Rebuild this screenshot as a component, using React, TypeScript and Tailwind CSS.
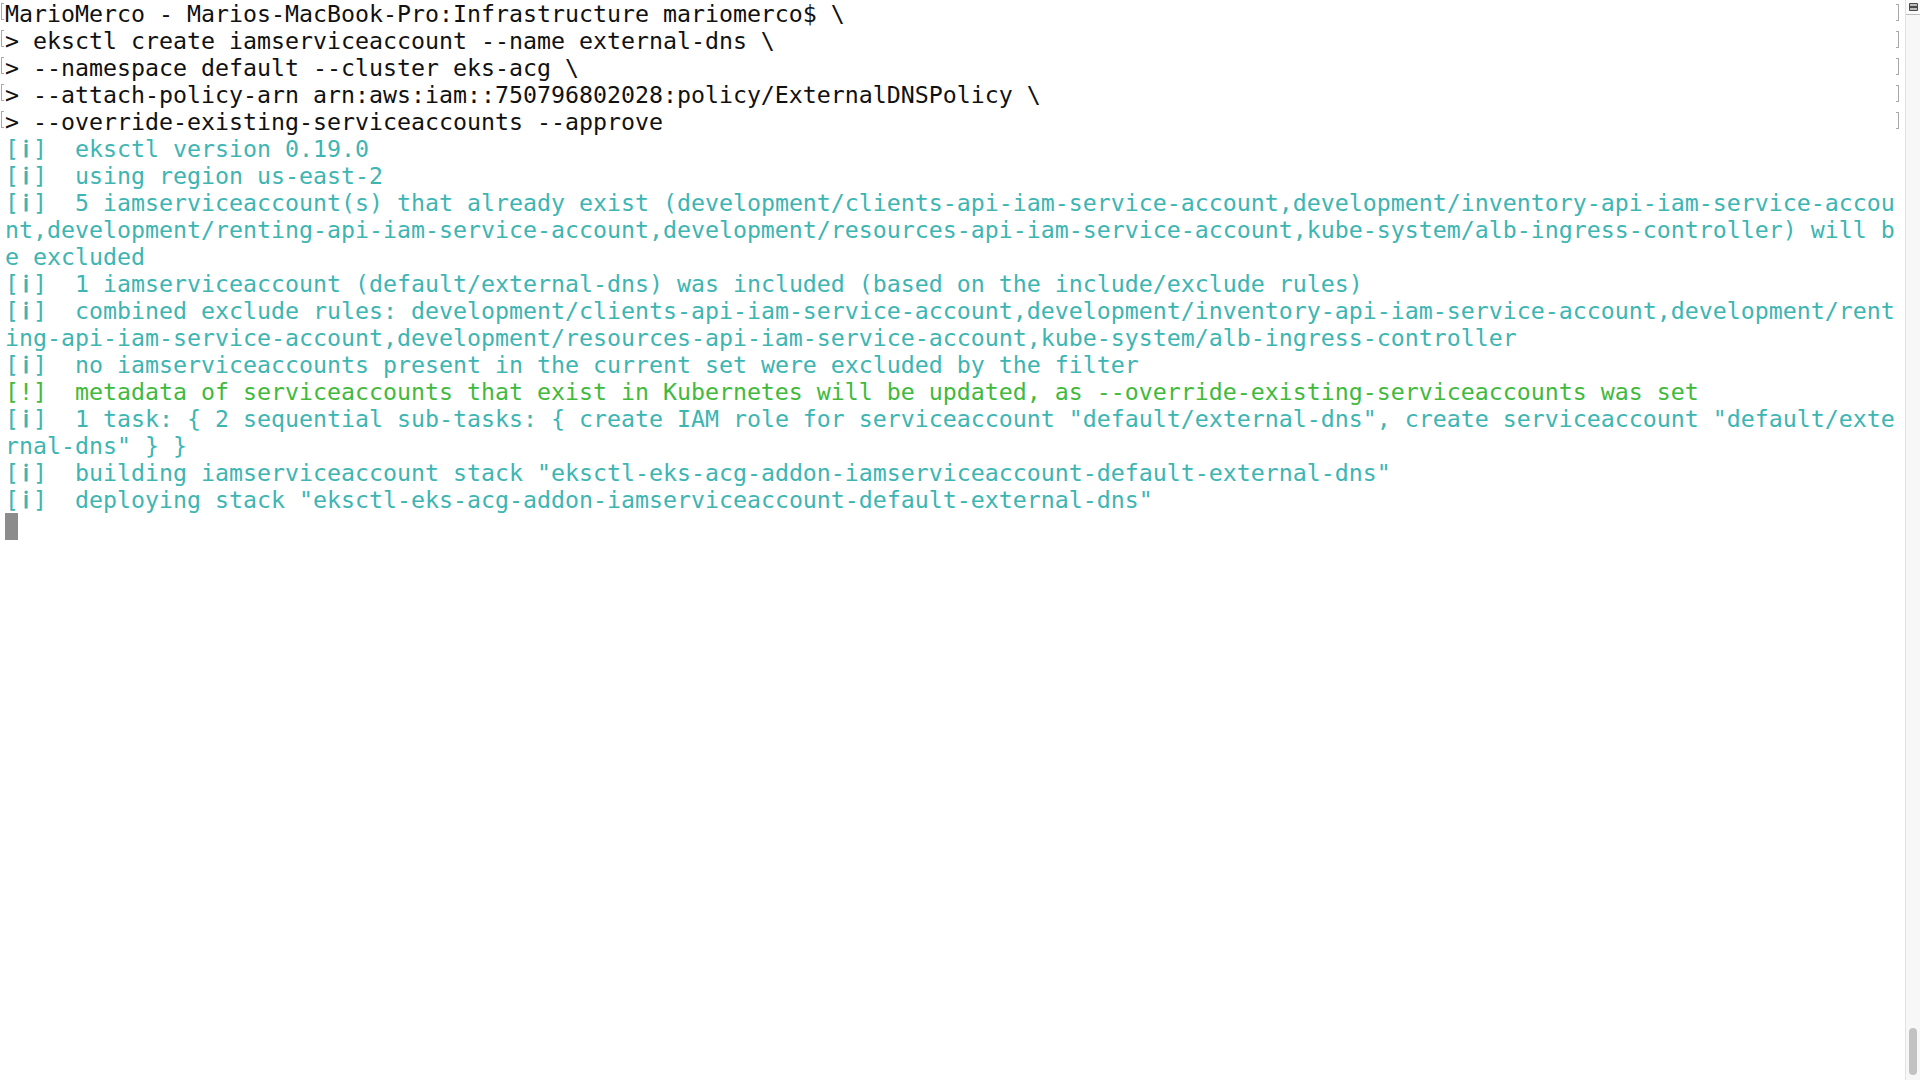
import React from "react";

type Line = { text: string; color: "black" | "cyan" | "green"; mark?: boolean };

const I = "\u2139";

const lines: Line[] = [
  { text: "MarioMerco - Marios-MacBook-Pro:Infrastructure mariomerco$ \\", color: "black", mark: true },
  { text: "> eksctl create iamserviceaccount --name external-dns \\", color: "black", mark: true },
  { text: "> --namespace default --cluster eks-acg \\", color: "black", mark: true },
  { text: "> --attach-policy-arn arn:aws:iam::750796802028:policy/ExternalDNSPolicy \\", color: "black", mark: true },
  { text: "> --override-existing-serviceaccounts --approve", color: "black", mark: true },
  { text: "[i]  eksctl version 0.19.0", color: "cyan" },
  { text: "[i]  using region us-east-2", color: "cyan" },
  { text: "[i]  5 iamserviceaccount(s) that already exist (development/clients-api-iam-service-account,development/inventory-api-iam-service-accou", color: "cyan" },
  { text: "nt,development/renting-api-iam-service-account,development/resources-api-iam-service-account,kube-system/alb-ingress-controller) will b", color: "cyan" },
  { text: "e excluded", color: "cyan" },
  { text: "[i]  1 iamserviceaccount (default/external-dns) was included (based on the include/exclude rules)", color: "cyan" },
  { text: "[i]  combined exclude rules: development/clients-api-iam-service-account,development/inventory-api-iam-service-account,development/rent", color: "cyan" },
  { text: "ing-api-iam-service-account,development/resources-api-iam-service-account,kube-system/alb-ingress-controller", color: "cyan" },
  { text: "[i]  no iamserviceaccounts present in the current set were excluded by the filter", color: "cyan" },
  { text: "[!]  metadata of serviceaccounts that exist in Kubernetes will be updated, as --override-existing-serviceaccounts was set", color: "green" },
  { text: "[i]  1 task: { 2 sequential sub-tasks: { create IAM role for serviceaccount \"default/external-dns\", create serviceaccount \"default/exte", color: "cyan" },
  { text: "rnal-dns\" } }", color: "cyan" },
  { text: "[i]  building iamserviceaccount stack \"eksctl-eks-acg-addon-iamserviceaccount-default-external-dns\"", color: "cyan" },
  { text: "[i]  deploying stack \"eksctl-eks-acg-addon-iamserviceaccount-default-external-dns\"", color: "cyan" },
];

function renderText(t: string) {
  if (t.startsWith("[i]")) {
    return (
      <>
        [<span className="inline-block w-[14px] text-center font-bold">{I}</span>]{t.slice(3)}
      </>
    );
  }
  return t;
}

function LeftMark() {
  return (
    <div className="mt-[3px] h-[17px] w-[3px] border-y border-l border-[#a8a8a8]" />
  );
}

function RightMark() {
  return (
    <div className="mt-[4px] h-[17px] w-[3px] border-y border-r border-[#a8a8a8]" />
  );
}

export default function App() {
  return (
    <div className="flex h-[1080px] w-[1920px] overflow-hidden bg-white">
      <div
        className="flex-1 text-[23.25px] leading-[27px]"
        style={{ fontFamily: '"DejaVu Sans Mono", "Liberation Mono", monospace' }}
      >
        {lines.map((l, idx) => (
          <div key={idx} className="flex h-[27px]">
            <div className="w-[5px] shrink-0 pl-[1px]">{l.mark ? <LeftMark /> : null}</div>
            <div
              className={
                "whitespace-pre " +
                (l.color === "black"
                  ? "text-[#111111]"
                  : l.color === "green"
                  ? "text-[#3fba3c]"
                  : "text-[#3db5b3]")
              }
            >
              {renderText(l.text)}
            </div>
            {l.mark ? (
              <div className="ml-auto mr-[6px] shrink-0">
                <RightMark />
              </div>
            ) : null}
          </div>
        ))}
        <div className="flex h-[27px]">
          <div className="w-[5px] shrink-0" />
          <div className="h-[27px] w-[13px] bg-[#8c8c8c]" />
        </div>
      </div>
      <div className="flex w-[15px] shrink-0 flex-col border-l border-[#e2e2e2] bg-[#f7f7f7]">
        <div className="flex h-[15px] items-center justify-center border-b border-[#bdbdbd] bg-[#fafafa]">
          <div className="flex h-[8px] w-[9px] flex-col justify-between rounded-[1px] bg-[#4a4a4a] p-[1px]">
            <div className="h-[2px] bg-[#bcbcbc]" />
            <div className="h-[2px] bg-[#bcbcbc]" />
          </div>
        </div>
        <div className="flex flex-1 flex-col justify-end px-[3px] pb-[5px]">
          <div className="h-[47px] rounded-full bg-[#c2c2c2]" />
        </div>
      </div>
    </div>
  );
}
